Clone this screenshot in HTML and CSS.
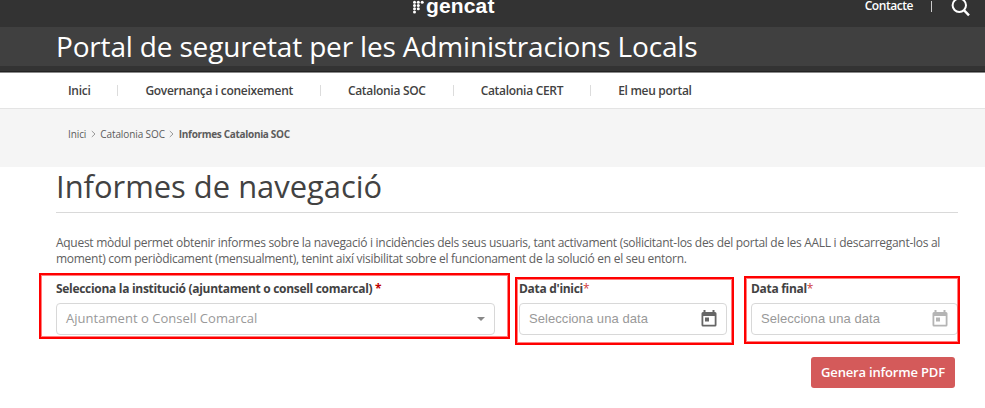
FILE: index.html
```html
<!DOCTYPE html>
<html lang="ca">
<head>
<meta charset="utf-8">
<title>Informes de navegació</title>
<link rel="stylesheet" href="styles.css">
</head>
<body>
<header>
  <div class="topbar">
    <div class="logo">
      <svg width="12" height="15" viewBox="0 0 12 15" fill="#fff"><circle cx="1.5" cy="3.2" r="1.5"/><circle cx="5.3" cy="3.2" r="1.5"/><circle cx="9.2" cy="3.2" r="1.5"/><circle cx="1.5" cy="6.500" r="1.5"/><circle cx="5.3" cy="6.500" r="1.5"/><circle cx="1.5" cy="9.800" r="1.5"/><circle cx="5.3" cy="9.800" r="1.5"/><circle cx="1.5" cy="13" r="1.5"/></svg>
      <span>gencat</span>
    </div>
    <div class="tools">
      <a class="contact">Contacte</a>
      <span class="bar"></span>
      <svg class="search" width="20" height="20" viewBox="0 0 20 20" fill="none" stroke="#fff" stroke-width="2"><circle cx="8.3" cy="8.3" r="6.7"/><path d="M12.9 13.2 18 18.3" stroke-width="2.4"/></svg>
    </div>
  </div>
  <div class="portal"><span>Portal de seguretat per les Administracions Locals</span></div>
  <div class="shade"></div>
</header>
<nav>
  <a>Inici</a><i></i><a>Governança i coneixement</a><i></i><a>Catalonia SOC</a><i></i><a>Catalonia CERT</a><i></i><a>El meu portal</a>
</nav>
<div class="crumbs">
  <a>Inici</a>
  <svg width="5" height="8" viewBox="0 0 5 8"><path d="M.8 1 4 4 .8 7"/></svg>
  <a>Catalonia SOC</a>
  <svg width="5" height="8" viewBox="0 0 5 8"><path d="M.8 1 4 4 .8 7"/></svg>
  <b>Informes Catalonia SOC</b>
</div>
<main>
  <h1>Informes de navegació</h1>
  <p>Aquest mòdul permet obtenir informes sobre la navegació i incidències dels seus usuaris, tant activament (sol·licitant-los des del portal de les AALL i descarregant-los al<br>moment) com periòdicament (mensualment), tenint així visibilitat sobre el funcionament de la solució en el seu entorn.</p>
  <div class="form">
    <div class="field">
      <label>Selecciona la institució (ajuntament o consell comarcal) <em>*</em></label>
      <div class="input"><span>Ajuntament o Consell Comarcal</span><span class="caret"></span></div>
      <div class="mark mark1"></div>
    </div>
    <div class="field">
      <label>Data d'inici<em class="thin">*</em></label>
      <div class="input date"><span>Selecciona una data</span><svg width="16" height="18" viewBox="0 0 16 18"><path fill-rule="evenodd" d="M2.5 0h2v2h7V0h2v2h.5q1.5 0 1.5 1.5V15q0 1.5-1.5 1.5H2Q.5 16.500.5 15V3.500Q.5 2 2 2h.5zM2.300 6v8.700h11.400V6zM4 7.500h4v4H4z"/></svg></div>
      <div class="mark mark2"></div>
    </div>
    <div class="field">
      <label>Data final<em class="thin">*</em></label>
      <div class="input date off"><span>Selecciona una data</span><svg width="16" height="18" viewBox="0 0 16 18"><path fill-rule="evenodd" d="M2.5 0h2v2h7V0h2v2h.5q1.5 0 1.5 1.5V15q0 1.5-1.5 1.5H2Q.5 16.500.5 15V3.500Q.5 2 2 2h.5zM2.300 6v8.700h11.400V6zM4 7.500h4v4H4z"/></svg></div>
      <div class="mark mark3"></div>
    </div>
  </div>
  <div class="actions"><button>Genera informe PDF</button></div>
</main>
</body>
</html>
```
FILE: styles.css
```css
* { box-sizing: border-box; }
body { margin: 0; height: 408px; overflow: hidden; background: #fff; color: #424242; font-family: "Open Sans", sans-serif; white-space: nowrap; }
header { height: 73px; background: #333; color: #fff; }
.topbar { height: 27px; display: flex; justify-content: space-between; padding: 0 14px 0 413px; }
.logo { display: flex; height: 20px; }
.logo svg { margin-top: -1px; }
.logo span { margin: -6px 0 0 1px; font: bold 21px/24px "Liberation Sans", sans-serif; letter-spacing: .15px; }
.tools { display: flex; height: 16px; font-size: 12px; line-height: 12px; font-weight: 600; }
.contact { letter-spacing: -.45px; }
.bar { width: 1px; height: 11px; margin: 1px 0 0 18px; background: #ccc; }
.search { margin: -3px 0 0 19px; }
.portal { height: 39px; padding-left: 56px; background: #404040; font-size: 28px; line-height: 39px; letter-spacing: -.17px; }
.shade { height: 7px; border-bottom: 1px solid #8a8a8a; box-shadow: inset 0 -1px #222; }
nav { height: 36px; display: flex; align-items: center; padding-left: 68px; border-bottom: 1px solid #e4e4e4; font-size: 12px; font-weight: 600; letter-spacing: -.3px; }
nav i { width: 1px; height: 11px; margin: 0 27px; background: #dcdcdc; }
.crumbs { height: 58px; display: flex; align-items: center; padding: 0 0 9px 68px; background: #f5f5f5; font-size: 10px; letter-spacing: -.1px; color: #5c5c5c; }
.crumbs svg { margin: 0 4.5px; fill: none; stroke: #999; }
.crumbs b { font-weight: 700; letter-spacing: -.32px; }
main { padding: 0 27px 0 56px; }
h1 { margin: 0; height: 46px; border-bottom: 1px solid #d9d9d9; font-size: 30.9px; line-height: 38px; font-weight: 400; }
p { margin: 22px 0 0; height: 34px; font-size: 12px; letter-spacing: -.28px; line-height: 16px; color: #606060; }
.form { display: grid; grid-template-columns: 439px 208px 207px; gap: 24px; margin-top: 11px; }
.field { position: relative; }
label { display: block; height: 23px; font-size: 12px; letter-spacing: -.3px; line-height: 17px; font-weight: 700; }
em { color: #c00000; font-style: normal; }
.thin { color: #d04040; font-weight: 400; }
.input { height: 32px; display: flex; align-items: center; justify-content: space-between; padding: 0 9px; border: 1px solid #d8d8d8; border-radius: 4px; color: #999; font-size: 13px; line-height: 16px; }
.input:not(.date) span:first-child { margin-top: -2px; letter-spacing: .03px; }
.caret { border: 4px solid transparent; border-top-color: #888; border-bottom: 0; }
.date { font-family: "Liberation Sans", sans-serif; letter-spacing: .06px; }
.date svg { fill: #666; }
.off svg { fill: #b5b5b5; }
.mark { position: absolute; border: 2px solid #f00; box-shadow: inset 0 0 0 1px rgba(255, 0, 0, .5); }
.mark1 { left: -17px; top: -7px; width: 471px; height: 66px; }
.mark2 { left: -4px; top: -3px; width: 219px; height: 68px; }
.mark3 { left: -7px; top: -4px; width: 216px; height: 68px; }
.actions { display: flex; justify-content: flex-end; padding: 22px 3px 0 0; }
button { width: 144px; height: 31px; padding: 0; border: 0; border-radius: 3px; background: #d45a5a; color: #fff; font: 600 13px/31px "Open Sans", sans-serif; letter-spacing: -.18px; }
```
